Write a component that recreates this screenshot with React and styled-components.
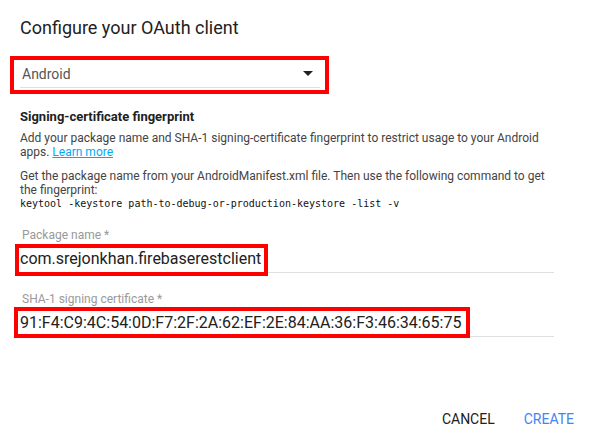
import React from "react";
import styled, { createGlobalStyle } from "styled-components";

const GlobalStyle = createGlobalStyle`
  * { box-sizing: border-box; }
  body {
    margin: 0;
    background: #fff;
    color: #212121;
    font: 12px/14px Roboto, sans-serif;
  }
`;

const Dialog = styled.form`
  padding: 16px 20px 8px;
`;

const Content = styled.div`
  padding-right: 20px;
`;

const Title = styled.h1`
  margin: 0 0 20px;
  font-size: 18px;
  line-height: 24px;
  font-weight: 400;
`;

const Highlight = styled.div`
  position: absolute;
  inset: ${(p) => p.$inset};
  width: ${(p) => p.$width};
  border: 4px solid #f00;
  pointer-events: none;
`;

const SelectBox = styled.div`
  position: relative;
  display: grid;
  align-items: center;
  max-width: 300px;
  height: 28px;
  border-bottom: 1px solid #e0e0e0;

  > select, > svg { grid-area: 1 / 1; }
`;

const Select = styled.select`
  appearance: none;
  width: 100%;
  height: 27px;
  padding: 0 24px 0 2px;
  border: 0;
  outline: 0;
  background: transparent;
  color: #555;
  font: 14px/20px Roboto, sans-serif;
`;

const Arrow = styled.svg`
  justify-self: end;
  margin-right: 7px;
  pointer-events: none;
`;

const Heading = styled.h2`
  margin: 21px 0 6px;
  font-size: 13px;
  line-height: 16px;
  font-weight: 700;
`;

const Text = styled.p`
  margin: 0 0 10px;
  color: #444;
`;

const Link = styled.a`
  color: #03a9f4;
  text-decoration: underline;
`;

const Command = styled.code`
  display: block;
  color: #111;
  font: 10px/14px "DejaVu Sans Mono", monospace;
`;

const Fields = styled.div`
  display: grid;
  gap: 19px;
  margin-top: 17px;
`;

const Field = styled.div`
  position: relative;
  display: flex;
  flex-direction: column;
`;

const Label = styled.label`
  padding: 0 0 1px 2px;
  color: #999;
`;

const Input = styled.input`
  width: 100%;
  height: 30px;
  padding: 2px 0 0;
  border: 0;
  border-bottom: 1px solid #e0e0e0;
  border-radius: 0;
  outline: 0;
  background: transparent;
  color: #212121;
  font: 16px/20px Roboto, sans-serif;
`;

const Actions = styled.div`
  display: flex;
  justify-content: flex-end;
  gap: 29px;
  margin-top: 64px;
`;

const Button = styled.button`
  height: 36px;
  padding: 0;
  border: 0;
  background: transparent;
  color: ${(p) => (p.$primary ? "#4285f4" : "#212121")};
  font: 14px/20px Roboto, sans-serif;
  text-transform: uppercase;
  cursor: pointer;
`;

export default function App() {
  return (
    <>
      <GlobalStyle />
      <Dialog onSubmit={(e) => e.preventDefault()}>
        <Content>
          <Title>Configure your OAuth client</Title>
          <SelectBox>
            <Select aria-label="Application type" defaultValue="Android">
              <option>Android</option>
            </Select>
            <Arrow width="10" height="5" viewBox="0 0 10 5" aria-hidden="true">
              <path d="M0 0h10L5 5z" fill="#212121" />
            </Arrow>
            <Highlight $inset="-4px -9px -7px -10px" />
          </SelectBox>

          <Heading>Signing-certificate fingerprint</Heading>
          <Text>
            Add your package name and SHA-1 signing-certificate fingerprint to
            restrict usage to your Android apps. <Link href="#">Learn more</Link>
          </Text>
          <Text>
            Get the package name from your AndroidManifest.xml file. Then use the
            following command to get the fingerprint:
            <Command>
              keytool -keystore path-to-debug-or-production-keystore -list -v
            </Command>
          </Text>

          <Fields>
            <Field>
              <Label htmlFor="package">Package name *</Label>
              <Input id="package" defaultValue="com.srejonkhan.firebaserestclient" />
              <Highlight $inset="16px auto -3px -5px" $width="253px" />
            </Field>
            <Field>
              <Label htmlFor="sha">SHA-1 signing certificate *</Label>
              <Input
                id="sha"
                defaultValue="91:F4:C9:4C:54:0D:F7:2F:2A:62:EF:2E:84:AA:36:F3:46:34:65:75"
              />
              <Highlight $inset="15px auto -1px -6px" $width="456px" />
            </Field>
          </Fields>
        </Content>

        <Actions>
          <Button type="button">Cancel</Button>
          <Button type="submit" $primary>Create</Button>
        </Actions>
      </Dialog>
    </>
  );
}
